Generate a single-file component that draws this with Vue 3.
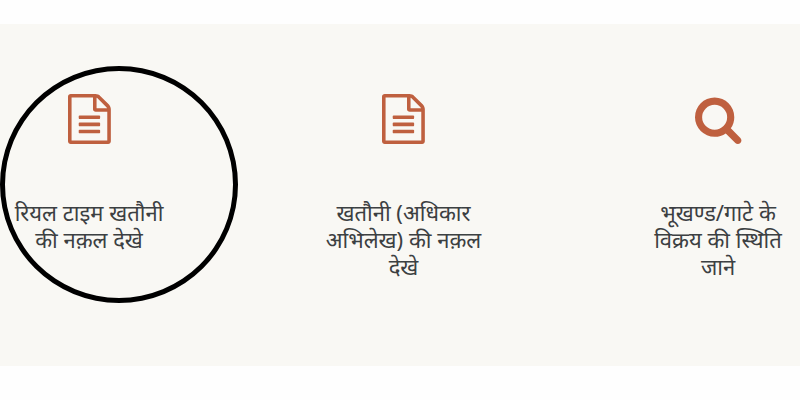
<script setup>
const services = [
  { icon: 'file', label: 'रियल टाइम खतौनी की नक़ल देखे', marked: true },
  { icon: 'file', label: 'खतौनी (अधिकार अभिलेख) की नक़ल देखे' },
  { icon: 'search', label: 'भूखण्ड/गाटे के विक्रय की स्थिति जाने' },
]
</script>

<template>
  <main class="panel">
    <a v-for="item in services" :key="item.label" href="#" class="service">
      <svg v-if="item.icon === 'file'" class="icon" viewBox="0 0 1536 1792" aria-hidden="true">
        <path d="M1468 380q28 28 48 76t20 88v1152q0 40-28 68t-68 28h-1344q-40 0-68-28t-28-68v-1600q0-40 28-68t68-28h896q40 0 88 20t76 48zm-444-244v376h376q-10-29-22-41l-313-313q-12-12-41-22zm384 1528v-1024h-416q-40 0-68-28t-28-68v-416h-768v1536h1280zm-1024-864q0-14 9-23t23-9h704q14 0 23 9t9 23v64q0 14-9 23t-23 9h-704q-14 0-23-9t-9-23v-64zm736 224q14 0 23 9t9 23v64q0 14-9 23t-23 9h-704q-14 0-23-9t-9-23v-64q0-14 9-23t23-9h704zm0 256q14 0 23 9t9 23v64q0 14-9 23t-23 9h-704q-14 0-23-9t-9-23v-64q0-14 9-23t23-9h704z" />
      </svg>
      <svg v-else class="icon" viewBox="0 -128 1664 1792" aria-hidden="true">
        <path d="M1152 704q0-185-131.500-316.500t-316.500-131.500-316.500 131.500-131.500 316.500 131.500 316.500 316.500 131.500 316.500-131.500 131.500-316.500zm512 832q0 52-38 90t-90 38q-54 0-90-38l-343-342q-179 124-399 124-143 0-273.500-55.500t-225-150-150-225-55.500-273.500 55.500-273.500 150-225 225-150 273.500-55.500 273.500 55.500 225 150 150 225 55.500 273.500q0 220-124 399l343 343q37 37 37 90z" />
      </svg>
      <span class="label">{{ item.label }}</span>
      <span v-if="item.marked" class="ring"></span>
    </a>
  </main>
</template>

<style>
body {
  background: #fefefe;
}
</style>

<style scoped>
.panel {
  display: flex;
  justify-content: space-between;
  margin: 24px 0 34px;
  padding: 70px 0 86px 7px;
  background: #f9f8f4;
  font-family: "Noto Sans", "Noto Sans Devanagari", "Open Sans", sans-serif;
}

.service {
  position: relative;
  display: flex;
  flex-direction: column;
  align-items: center;
  gap: 55px;
  width: 164px;
  color: #3c4042;
  text-align: center;
  text-decoration: none;
}

.icon {
  height: 50px;
  overflow: visible;
  fill: #bf603f;
}

.label {
  font-size: 22px;
  line-height: 27px;
}

.ring {
  position: absolute;
  top: -28px;
  left: -7px;
  box-sizing: border-box;
  width: 238px;
  height: 237px;
  border: 5px solid #000;
  border-radius: 50%;
  pointer-events: none;
}
</style>
